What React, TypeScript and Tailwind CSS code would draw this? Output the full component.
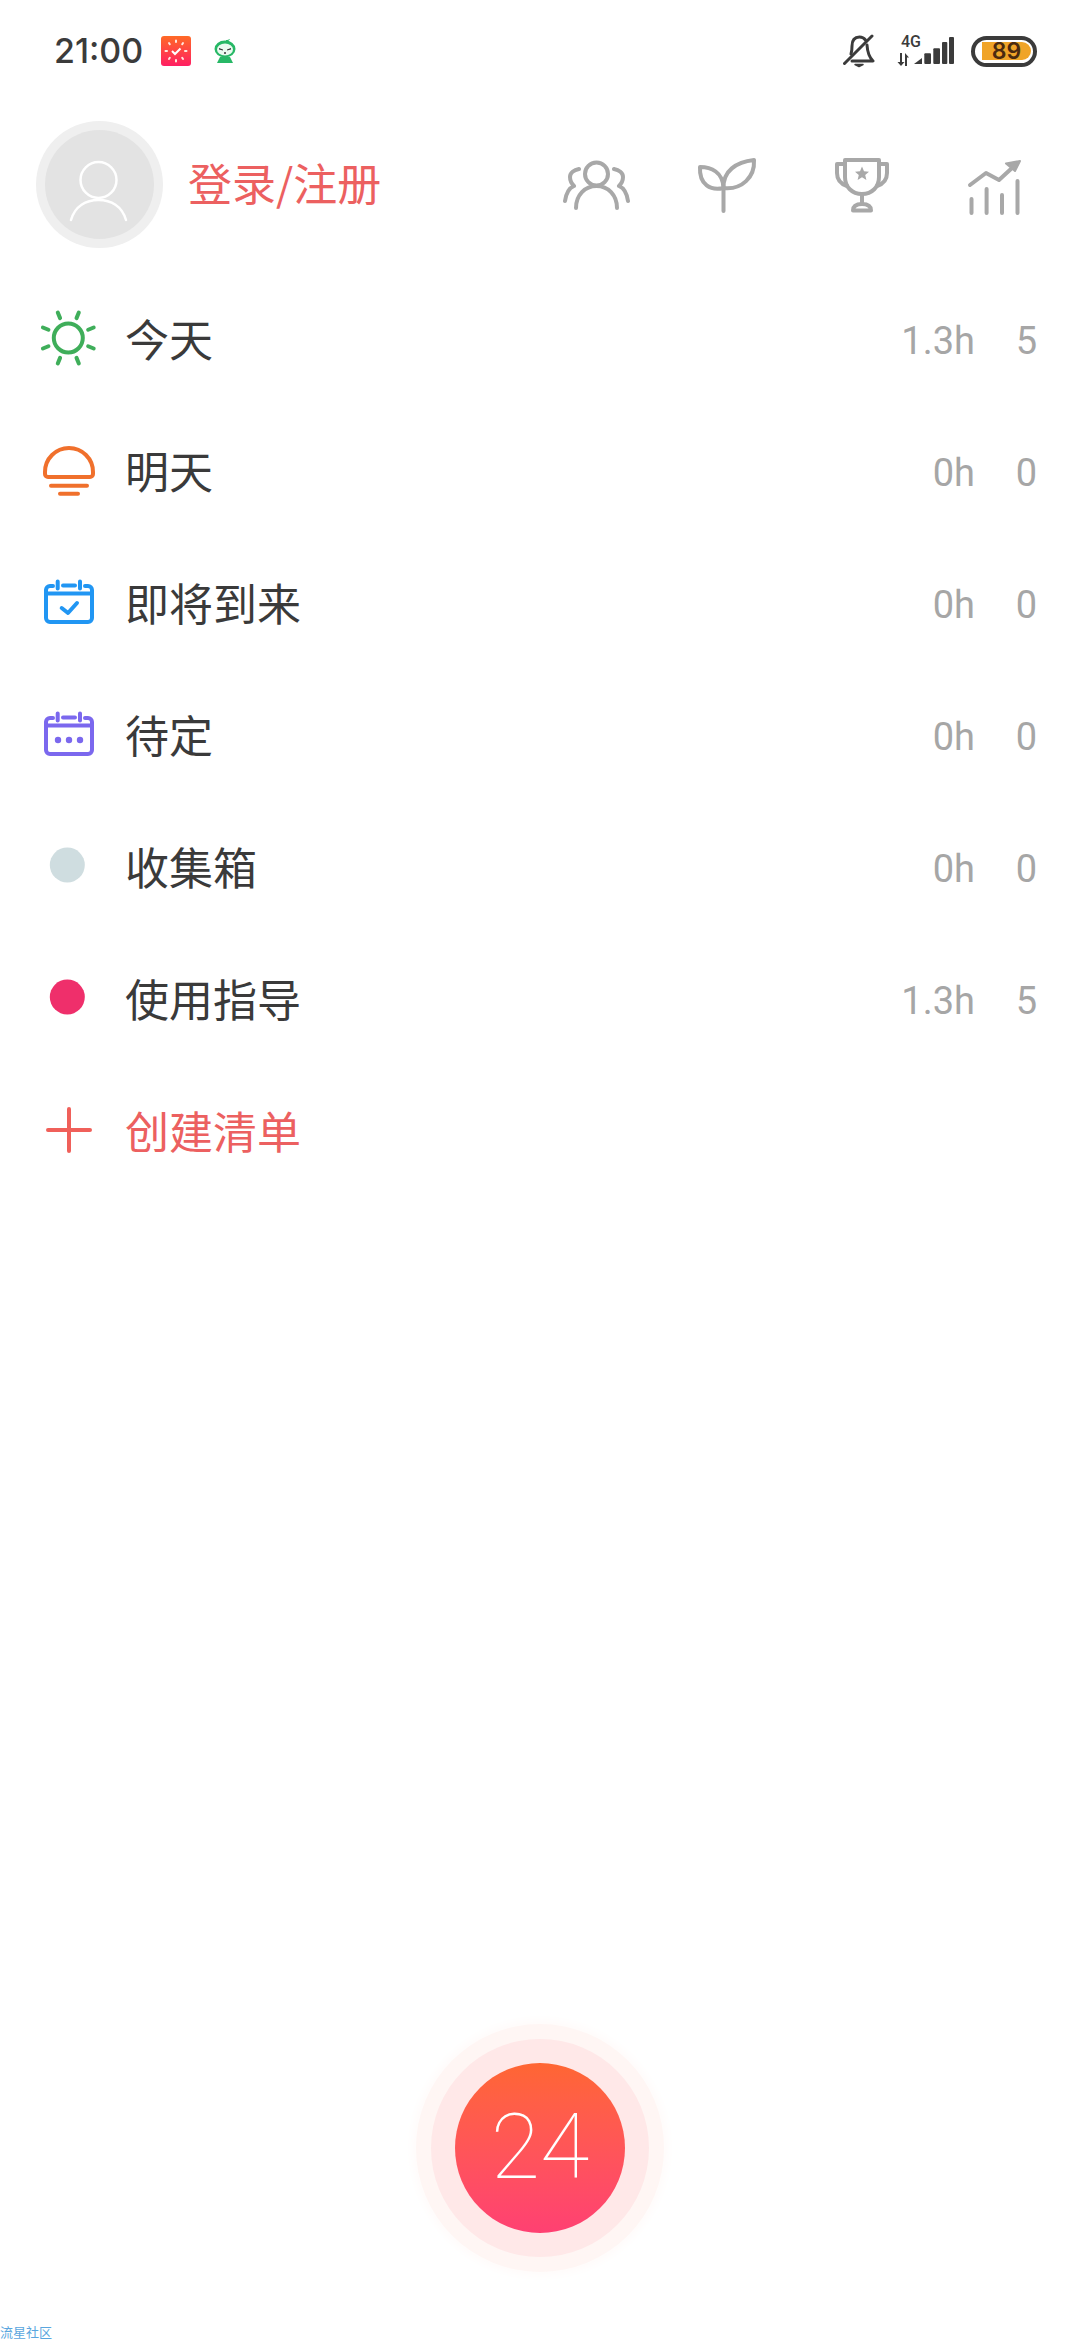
import React from "react";

const cjk = { fontFamily: '"Noto Sans CJK SC", "Noto Sans", sans-serif' };

function Sun() {
  const rays = [22.5, 67.5, 112.5, 157.5, 202.5, 247.5, 292.5, 337.5];
  return (
    <svg width="66" height="66" viewBox="0 0 66 66" fill="none" stroke="#3fae5a" strokeWidth="4" strokeLinecap="round">
      <circle cx="32.3" cy="31" r="14.5" />
      {rays.map((a) => {
        const r = (a * Math.PI) / 180;
        return (
          <line key={a} x1={32.3 + 21.5 * Math.cos(r)} y1={31 + 21.5 * Math.sin(r)} x2={32.3 + 27.5 * Math.cos(r)} y2={31 + 27.5 * Math.sin(r)} />
        );
      })}
    </svg>
  );
}

function HalfSun() {
  return (
    <svg width="66" height="66" viewBox="0 0 66 66" fill="none" stroke="#f0702c" strokeWidth="4" strokeLinecap="round">
      <path d="M9 33a24 24 0 0 1 48 0v2a3 3 0 0 1-3 3H12a3 3 0 0 1-3-3Z" />
      <path d="M15 46.7H51M24 54.7H42" />
    </svg>
  );
}

function Calendar({ color, children }: { color: string; children: React.ReactNode }) {
  return (
    <svg width="66" height="66" viewBox="0 0 66 66" fill="none" stroke={color} strokeWidth="4" strokeLinecap="round" strokeLinejoin="round">
      <path d="M17 15H14a4 4 0 0 0-4 4V47a4 4 0 0 0 4 4H52a4 4 0 0 0 4-4V19a4 4 0 0 0-4-4H49" />
      <path d="M27 14.500H39" />
      <path d="M10 22.500H56" strokeLinecap="butt" />
      <path d="M21.700 10.500V17.500M44 10.500V17.500" strokeWidth="4" />
      {children}
    </svg>
  );
}

function Dot({ color }: { color: string }) {
  return (
    <svg width="66" height="66" viewBox="0 0 66 66">
      <circle cx="31.3" cy="30" r="17.5" fill={color} />
    </svg>
  );
}

function Plus() {
  return (
    <svg width="66" height="66" viewBox="0 0 66 66" fill="none" stroke="#f0605a" strokeWidth="4" strokeLinecap="round">
      <path d="M12 31H54M33 10V52" />
    </svg>
  );
}

function Row({ icon, label, hours, count, red }: { icon: React.ReactNode; label: string; hours?: string; count?: string; red?: boolean }) {
  return (
    <div className="flex h-[132px] items-center pl-[36px] pr-[43px]">
      <div className="h-[66px] w-[66px] shrink-0">{icon}</div>
      <div style={cjk} className={`mb-[4px] ml-[23px] flex-1 text-[44px] leading-[60px] ${red ? "text-[#ec6060]" : "text-[#3a3a3a]"}`}>
        {label}
      </div>
      {hours && (
        <div className="mt-[2px] flex text-[38px] leading-[50px] text-[#a6a6a6] [font-family:Roboto,sans-serif]">
          <span>{hours}</span>
          <span className="w-[62px] text-right">{count}</span>
        </div>
      )}
    </div>
  );
}

function StatusBar() {
  return (
    <div className="flex h-[102px] items-center pl-[54px] pr-[43px]">
      <span className="w-[89px] whitespace-nowrap text-[34px] font-medium leading-none text-[#3b3b3b] [font-family:Inter,sans-serif]">21:00</span>
      <svg className="ml-[18px]" width="30" height="30" viewBox="0 0 30 30">
        <defs>
          <linearGradient id="appg" x1="0" y1="0" x2="0" y2="1">
            <stop offset="0" stopColor="#ff6a26" />
            <stop offset="1" stopColor="#ff1f63" />
          </linearGradient>
        </defs>
        <rect width="30" height="30" rx="3" fill="url(#appg)" />
        <g stroke="#ffe9e0" strokeWidth="2" strokeLinecap="round">
          <path d="M15 4.500v1.500M15 24v1.500M4.500 15H6M24 15h1.500M8 7l.8 1.200M22 7l-.8 1.200M8 23l.8-1.200M22 23l-.8-1.200" />
        </g>
        <path d="M11 15l3 3 5.500-5.500" fill="none" stroke="#ffffff" strokeWidth="2" />
      </svg>
      <svg className="ml-[21px]" width="26" height="26" viewBox="0 0 26 26">
        <path d="M14 2c1.500 0 3-.5 4-1-.5 1.500-2 2.500-4 2.500Z" fill="#27b866" />
        <ellipse cx="13" cy="11" rx="10.500" ry="8.500" fill="#27b866" />
        <ellipse cx="13" cy="11.500" rx="8" ry="6" fill="#eafaf0" />
        <path d="M7 10l4 1.500v1l-4-1ZM19 10l-4 1.500v1l4-1Z" fill="#333333" />
        <circle cx="13" cy="15" r="1" fill="#333333" />
        <path d="M8 19h10l3 6H5Z" fill="#27b866" />
      </svg>
      <div className="flex-1" />
      <svg width="32" height="34" viewBox="0 0 32 34" fill="none" stroke="#3b3b3b" strokeWidth="3" strokeLinecap="round" strokeLinejoin="round">
        <path d="M8 20C9 17 9 15 9 12 C9 6 12 3 16.500 3C19 3 21 4 22.500 6" />
        <path d="M24 11C24.500 19 26 23 30 27H9" />
        <path d="M1.500 29.500L29 2" />
        <path d="M12 30.500H20L16 32.500Z" fill="#3b3b3b" strokeWidth="1.500" />
      </svg>
      <div className="ml-[22px] flex h-[32px] w-[17px] shrink-0 flex-col">
        <span className="ml-[4px] whitespace-nowrap text-[16px] font-medium leading-[14px] text-[#3b3b3b] [font-family:Roboto,sans-serif]">4G</span>
        <svg className="mt-[4px]" width="13" height="13" viewBox="0 0 13 13" fill="#3b3b3b">
          <path d="M3 0h2v9h2.500L4 13 .5 9H3ZM8 0l4 4.500H10V13H8Z" />
        </svg>
      </div>
      <svg width="40" height="32" viewBox="0 0 40 32" fill="#3b3b3b">
        <path d="M0 29L8 23V29H0Z" />
        <rect x="10.300" y="18.300" width="6.700" height="10.700" rx="1" />
        <rect x="19.300" y="13.300" width="6.700" height="15.700" rx="1" />
        <rect x="28" y="7" width="5.300" height="22" rx="1" />
        <rect x="35" y="2" width="5" height="27" rx="1" />
      </svg>
      <div className="ml-[17px] flex h-[31px] w-[66px] items-center rounded-full border-[4px] border-[#3b3b3b] pl-[7px] pr-[2px]">
        <div className="flex h-[18px] flex-1 items-center justify-center rounded-r-full bg-[#f0a428] text-[23px] font-semibold leading-none text-[#4b2a10] [font-family:Inter,sans-serif]">
          89
        </div>
      </div>
    </div>
  );
}

function Users() {
  return (
    <svg width="67" height="56" viewBox="0 0 67 56" fill="none" stroke="#a8a8a8" strokeWidth="4" strokeLinecap="round" strokeLinejoin="round">
      <circle cx="33.500" cy="17" r="11.500" />
      <path d="M13 51C13 38 22 29 33.500 29C45 29 54 38 54 51" />
      <path d="M16 12C11 13 7 16 7 20C7 24 9 27 11 29C6 31 3 37 2 44" />
      <path d="M51 12C56 13 60 16 60 20C60 24 58 27 56 29C61 31 64 37 65 44" />
    </svg>
  );
}

function Sprout() {
  return (
    <svg width="62" height="56" viewBox="0 0 62 56" fill="none" stroke="#a8a8a8" strokeWidth="4" strokeLinecap="round" strokeLinejoin="round">
      <path d="M27.500 31V54" />
      <path d="M4 10C15 10 27 15 27.500 31C15 34 3 28 4 10Z" />
      <path d="M27.500 31C27 14 40 5 58 3C59 20 46 33 27.500 31Z" />
    </svg>
  );
}

function Trophy() {
  return (
    <svg width="64" height="56" viewBox="0 0 64 56" fill="none" stroke="#a8a8a8" strokeWidth="4" strokeLinecap="round" strokeLinejoin="round">
      <path d="M15 3H49V20C49 30 42 37 32 37C22 37 15 30 15 20Z" />
      <path d="M15 7H7V16C7 23 11 27 17 29M49 7H57V16C57 23 53 27 47 29" />
      <path d="M32 37V47" />
      <path d="M23 53.500C23 49 26 47 32 47C38 47 41 49 41 53.500Z" />
      <path d="M32 9.500L34 14.200L39 14.700L35.200 18L36.400 23L32 20.300L27.600 23L28.800 18L25 14.700L30 14.200Z" fill="#a8a8a8" stroke="none" />
    </svg>
  );
}

function Chart() {
  return (
    <svg width="64" height="60" viewBox="0 0 64 60" fill="none" stroke="#a8a8a8" strokeWidth="4" strokeLinecap="round" strokeLinejoin="round">
      <path d="M9.500 42V56M24.600 32V56M40 38V56M55.500 24V56" />
      <path d="M8 28L24 16L37 23L50 11" />
      <path d="M44 6.500L58 4L53 14Z" fill="#a8a8a8" strokeWidth="2" />
    </svg>
  );
}

function Header() {
  return (
    <div className="mt-[19px] flex h-[127px] items-center pl-[36px] pr-[54px]">
      <div className="flex h-[127px] w-[127px] shrink-0 items-center justify-center rounded-full bg-[#efefef]">
        <div className="h-[109px] w-[109px] rounded-full bg-[#e3e3e3]">
          <svg width="109" height="109" viewBox="0 0 109 109" fill="none" stroke="#ffffff" strokeWidth="2.500" strokeLinecap="round">
            <circle cx="53.500" cy="50" r="18" />
            <path d="M26 90C30 76 41 70 53.500 70C66 70 77 76 81 90" />
          </svg>
        </div>
      </div>
      <div style={cjk} className="mb-[6px] ml-[25px] flex-1 text-[44px] leading-[60px] text-[#ec6060]">登录/注册</div>
      <Users />
      <div className="ml-[66px]"><Sprout /></div>
      <div className="ml-[72px]"><Trophy /></div>
      <div className="ml-[68px] mt-[4px]"><Chart /></div>
    </div>
  );
}

function Fab() {
  return (
    <div className="flex justify-center">
      <div className="flex h-[248px] w-[248px] items-center justify-center rounded-full bg-[#fff6f4] shadow-[0_0_10px_4px_#fffbfa]">
        <div className="flex h-[218px] w-[218px] items-center justify-center rounded-full bg-[#ffe8e8]">
          <div className="flex h-[170px] w-[170px] items-center justify-center rounded-full bg-gradient-to-b from-[#ff6632] to-[#ff4072] text-[90px] font-thin leading-none text-white [font-family:Roboto,sans-serif]">
            24
          </div>
        </div>
      </div>
    </div>
  );
}

export default function App() {
  return (
    <div className="flex h-[2340px] w-[1080px] flex-col overflow-hidden bg-white">
      <StatusBar />
      <Header />
      <div className="mt-[26px]">
        <Row icon={<Sun />} label="今天" hours="1.3h" count="5" />
        <Row icon={<HalfSun />} label="明天" hours="0h" count="0" />
        <Row
          icon={
            <Calendar color="#2196f3">
              <path d="M25.700 37L32 42L41 32" />
            </Calendar>
          }
          label="即将到来"
          hours="0h"
          count="0"
        />
        <Row
          icon={
            <Calendar color="#7b68ee">
              <circle cx="22" cy="37" r="3.200" fill="#7b68ee" stroke="none" />
              <circle cx="33" cy="37" r="3.200" fill="#7b68ee" stroke="none" />
              <circle cx="44" cy="37" r="3.200" fill="#7b68ee" stroke="none" />
            </Calendar>
          }
          label="待定"
          hours="0h"
          count="0"
        />
        <Row icon={<Dot color="#cfdde0" />} label="收集箱" hours="0h" count="0" />
        <Row icon={<Dot color="#ef2f6b" />} label="使用指导" hours="1.3h" count="5" />
        <Row icon={<Plus />} label="创建清单" red />
      </div>
      <div className="flex-1" />
      <Fab />
      <div className="mt-[52px] whitespace-nowrap text-[13px] leading-[16px] text-[#5aa6de]" style={cjk}>
        流星社区
      </div>
    </div>
  );
}
